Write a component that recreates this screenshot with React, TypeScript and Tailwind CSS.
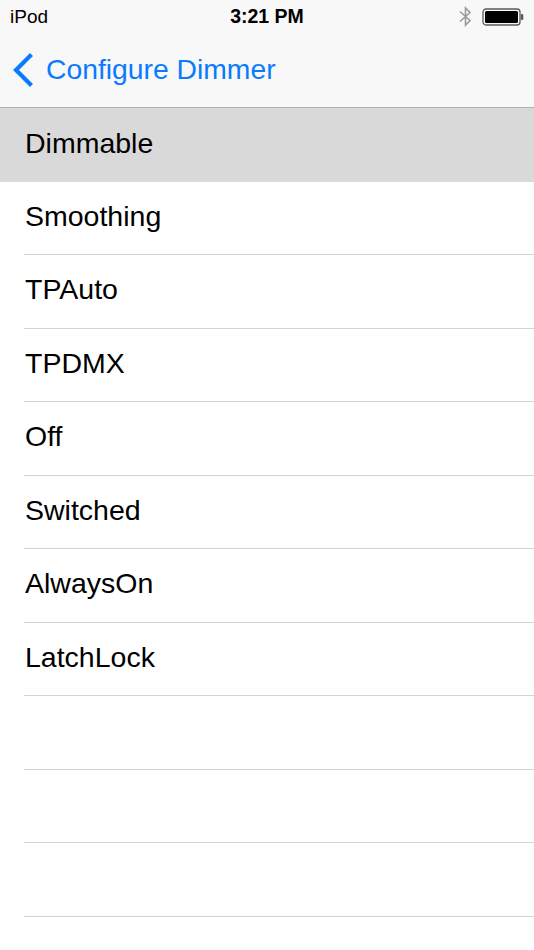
import React from 'react';

const items = ['Dimmable', 'Smoothing', 'TPAuto', 'TPDMX', 'Off', 'Switched', 'AlwaysOn', 'LatchLock', '', '', '', ''];

const StatusBar: React.FC = () => (
  <div className="relative h-[33px] flex items-center justify-between pl-[10px] pr-[10px] text-black">
    <span className="text-[19px] leading-none">iPod</span>
    <span className="absolute left-1/2 -translate-x-1/2 text-[19.5px] font-bold leading-none">3:21 PM</span>
    <div className="flex items-center gap-[10px]">
      <svg width="13" height="21" viewBox="0 0 13 21" fill="none" stroke="#9a9a9a" strokeWidth="1.6">
        <polyline points="1,5.5 11,14.5 6.5,19 6.5,2 11,6.5 1,15.5" />
      </svg>
      <svg width="42" height="18" viewBox="0 0 42 18">
        <rect x="1" y="1" width="37" height="16" rx="3" fill="none" stroke="#5a5a5a" strokeWidth="1.3" />
        <rect x="3" y="3" width="33" height="12" rx="1.5" fill="#000" />
        <rect x="38.8" y="6" width="2.5" height="6" rx="1" fill="#5a5a5a" />
      </svg>
    </div>
  </div>
);

const App: React.FC = () => {
  return (
    <div className="w-[534px] h-[950px] overflow-hidden bg-white" style={{ fontFamily: '"Liberation Sans", Arial, sans-serif' }}>
      <div className="bg-[#f8f8f8] border-b border-[#b2b2b2]">
        <StatusBar />
        <div className="h-[74px] flex items-center pl-[13px] pb-[1px] text-[#0a7aff]">
          <svg width="22" height="34" viewBox="0 0 22 34" fill="none" stroke="#0a7aff" strokeWidth="4.2" strokeLinecap="square">
            <polyline points="17,3 3,17 17,31" />
          </svg>
          <span className="ml-[11px] text-[28.3px] leading-none">Configure Dimmer</span>
        </div>
      </div>
      <div className="flex flex-col">
        {items.map((name, i) => (
          <div key={i} className={i === 0 ? 'bg-[#d9d9d9]' : ''}>
            <div
              className={
                'ml-6 h-[73.5px] flex items-center pl-px pb-1 text-[28.5px] leading-none text-black ' +
                (i === 0 ? '' : 'border-b border-[#d4d4d4]')
              }
            >
              {name}
            </div>
          </div>
        ))}
      </div>
    </div>
  );
};

export default App;
